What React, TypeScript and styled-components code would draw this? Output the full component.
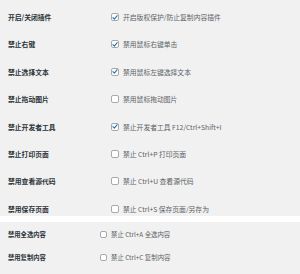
import React from "react";
import styled, { createGlobalStyle } from "styled-components";

const Global = createGlobalStyle`
  html, body { margin: 0; padding: 0; background: #f1f1f1; }
  body { font-family: "Noto Sans CJK SC", "Noto Sans", sans-serif; }
`;

const Page = styled.div`
  width: 300px;
  height: 274px;
  background: #f1f1f1;
  display: flex;
  flex-direction: column;
  overflow: hidden;
`;

const Section = styled.div<{ $pt: number; $gap: number; $h: number }>`
  display: flex;
  flex-direction: column;
  padding-top: ${(p) => p.$pt}px;
  gap: ${(p) => p.$gap}px;
  height: ${(p) => p.$h}px;
  box-sizing: border-box;
`;

const Band = styled.div`
  height: 6px;
  background: #ffffff;
`;

const Row = styled.div<{ $col: number; $lh: number }>`
  display: grid;
  grid-template-columns: ${(p) => p.$col}px 1fr;
  align-items: center;
  height: ${(p) => p.$lh}px;
  padding-left: 8px;
`;

const Label = styled.div<{ $fs: number }>`
  font-size: ${(p) => p.$fs}px;
  font-weight: 700;
  color: #2c3338;
  white-space: nowrap;
`;

const Field = styled.div<{ $gap: number }>`
  display: flex;
  align-items: center;
  gap: ${(p) => p.$gap}px;
`;

const Box = styled.span<{ $s: number }>`
  width: ${(p) => p.$s}px;
  height: ${(p) => p.$s}px;
  box-sizing: border-box;
  border: 1px solid #a7aaad;
  border-radius: 2px;
  background: #ffffff;
  display: inline-flex;
  align-items: center;
  justify-content: center;
  flex: none;
`;

const Desc = styled.span<{ $fs: number }>`
  font-size: ${(p) => p.$fs}px;
  color: #5b6166;
  white-space: nowrap;
`;

const Check = () => (
  <svg width="7" height="7" viewBox="0 0 10 10">
    <path d="M1.5 5.2 L4 7.6 L8.6 2" fill="none" stroke="#2271b1" strokeWidth="1.8" strokeLinecap="round" strokeLinejoin="round" />
  </svg>
);

type Item = { label: string; desc: string; checked: boolean };

const top: Item[] = [
  { label: "开启/关闭插件", desc: "开启版权保护/防止复制内容插件", checked: true },
  { label: "禁止右键", desc: "禁用鼠标右键单击", checked: true },
  { label: "禁止选择文本", desc: "禁用鼠标左键选择文本", checked: true },
  { label: "禁止拖动图片", desc: "禁用鼠标拖动图片", checked: false },
  { label: "禁止开发者工具", desc: "禁止开发者工具 F12/Ctrl+Shift+I", checked: true },
  { label: "禁止打印页面", desc: "禁止 Ctrl+P 打印页面", checked: false },
  { label: "禁用查看源代码", desc: "禁止 Ctrl+U 查看源代码", checked: false },
  { label: "禁用保存页面", desc: "禁止 Ctrl+S 保存页面/另存为", checked: false },
];

const bottom: Item[] = [
  { label: "禁用全选内容", desc: "禁止 Ctrl+A 全选内容", checked: false },
  { label: "禁用复制内容", desc: "禁止 Ctrl+C 复制内容", checked: false },
];

export default function App() {
  return (
    <Page>
      <Global />
      <Section $pt={10} $gap={13.4} $h={216}>
        {top.map((it) => (
          <Row key={it.label} $col={103} $lh={14}>
            <Label $fs={6.8}>{it.label}</Label>
            <Field $gap={4}>
              <Box $s={8}>{it.checked && <Check />}</Box>
              <Desc $fs={6.8}>{it.desc}</Desc>
            </Field>
          </Row>
        ))}
      </Section>
      <Band />
      <Section $pt={6} $gap={11} $h={52}>
        {bottom.map((it) => (
          <Row key={it.label} $col={92} $lh={12}>
            <Label $fs={6.3}>{it.label}</Label>
            <Field $gap={4}>
              <Box $s={7}>{it.checked && <Check />}</Box>
              <Desc $fs={6.4}>{it.desc}</Desc>
            </Field>
          </Row>
        ))}
      </Section>
    </Page>
  );
}
